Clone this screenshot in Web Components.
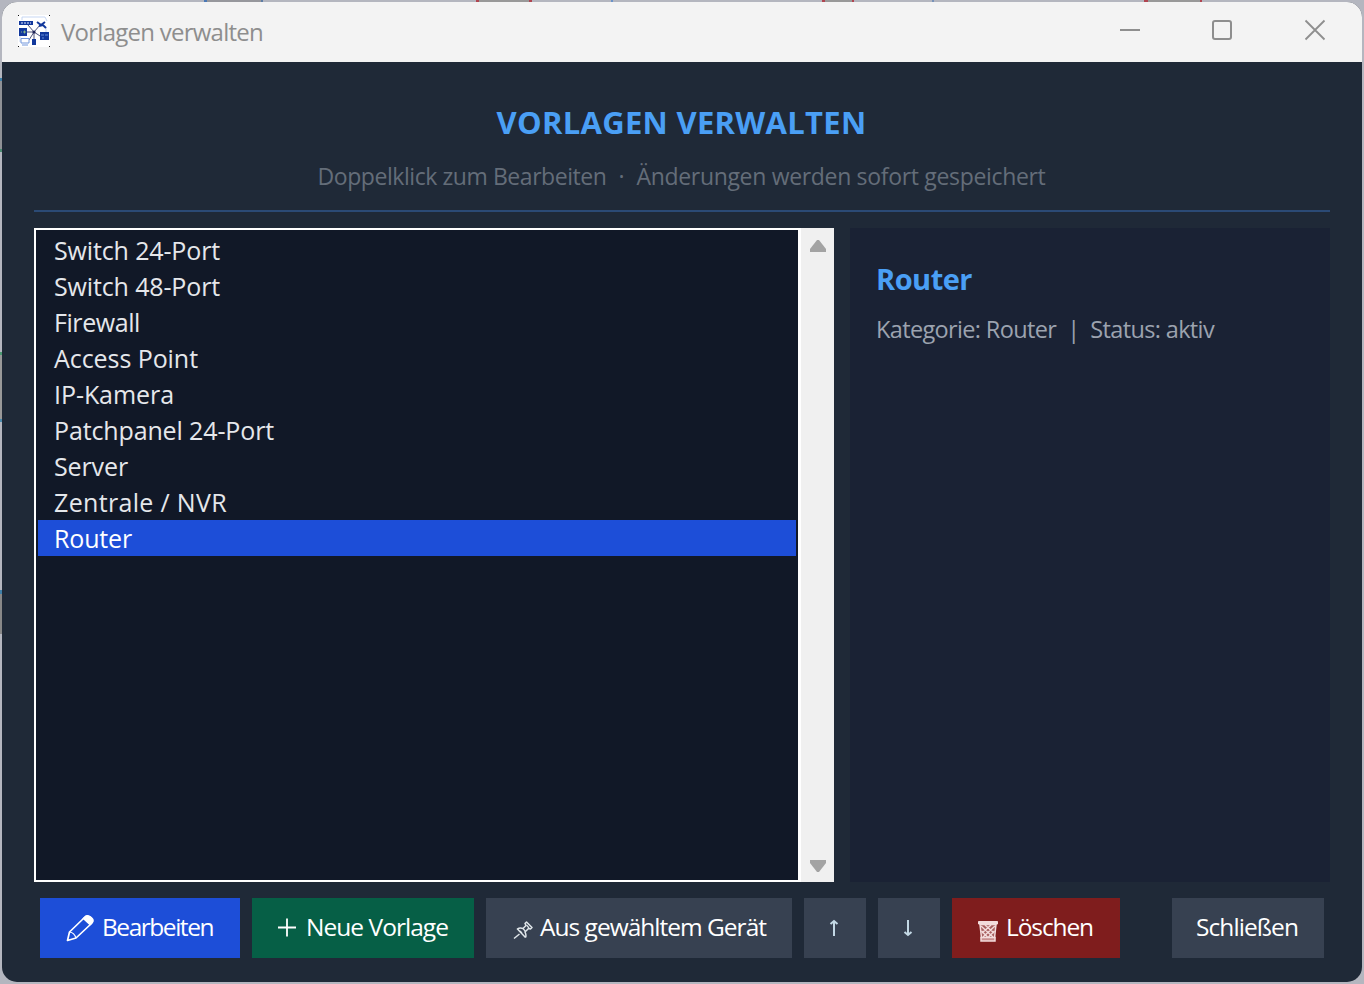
<!DOCTYPE html>
<html lang="de">
<head>
<meta charset="utf-8">
<title>Vorlagen verwalten</title>
<style>
    html, body {
        margin: 0;
        padding: 0;
        height: 100%;
        overflow: hidden;
    }
    body {
        font-family: "Open Sans", "Noto Sans", sans-serif;
    }
</style>
</head>
<body>

<app-window>
    <title-bar slot="titlebar"><fit-text width="202">Vorlagen verwalten</fit-text></title-bar>
    <page-header slot="header">
        <fit-text slot="title" width="370">VORLAGEN VERWALTEN</fit-text>
        <span slot="hint"><fit-text width="289">Doppelklick zum Bearbeiten</fit-text>&nbsp; ·&nbsp; <fit-text width="409">Änderungen werden sofort gespeichert</fit-text></span>
    </page-header>
    <template-list slot="list">
        <list-row><fit-text width="166">Switch 24-Port</fit-text></list-row>
        <list-row><fit-text width="166">Switch 48-Port</fit-text></list-row>
        <list-row><fit-text width="86">Firewall</fit-text></list-row>
        <list-row><fit-text width="144">Access Point</fit-text></list-row>
        <list-row><fit-text width="120">IP-Kamera</fit-text></list-row>
        <list-row><fit-text width="220">Patchpanel 24-Port</fit-text></list-row>
        <list-row><fit-text width="74">Server</fit-text></list-row>
        <list-row><fit-text width="173">Zentrale / NVR</fit-text></list-row>
        <list-row selected><fit-text width="78">Router</fit-text></list-row>
    </template-list>
    <detail-panel slot="detail">
        <fit-text slot="name" width="96">Router</fit-text>
        <fit-text slot="meta" width="338">Kategorie: Router&nbsp; |&nbsp; Status: aktiv</fit-text>
    </detail-panel>
    <tool-button slot="actions" style="--w:200px; --bg:#1d4ed8; --pad:26px; --gap:8px">
        <svg slot="icon" width="28" height="28" viewBox="0 0 28 28" fill="none" stroke="#fff" stroke-width="1.7" stroke-linejoin="round">
            <path d="M1.500 26.500 3.500 18 18.500 3.500C20 2 22 1.500 24 3c2.500 1.700 3.500 4 1.500 6.500L10 24Z"/>
            <path d="m17.500 4.500 2-2C22 .5 28 4.500 26.500 8L24 10.500Z" fill="#fff"/>
            <path d="M3.500 18c3.500.5 5.500 2.500 6.500 6" stroke-width="1.200"/>
        </svg>
        <fit-text width="111">Bearbeiten</fit-text>
    </tool-button>
    <tool-button slot="actions" style="--w:222px; --bg:#065f46; --pad:25px; --gap:9px">
        <svg slot="icon" width="20" height="20" viewBox="0 0 20 20" stroke="#fff" stroke-width="1.800"><path d="M1 9.500h18M10 .5v18"/></svg>
        <fit-text width="142">Neue Vorlage</fit-text>
    </tool-button>
    <tool-button slot="actions" style="--w:306px; --bg:#374151; --pad:27px; --gap:7px">
        <svg slot="icon" width="20" height="20" viewBox="0 0 20 20" fill="none" stroke="#dfe5e9" stroke-width="1.500" stroke-linejoin="round" style="margin-top:4px">
            <path d="M1 18.500 6.500 14M4 8.500 12.500 17.500M4.500 9c2-1.500 4-1 5.500-.5L13 5.500 12 3.500 13.500 2l5.500 5.500-1.500 1.500-2-.5-3.500 3.500c1 2 1.500 3.500.5 5.500"/>
            <path d="m10 8.500 2.500 3M13.500 5l2.500 3M7 11l2 2" stroke-width="1.200"/>
        </svg>
        <fit-text width="226">Aus gewähltem Gerät</fit-text>
    </tool-button>
    <tool-button slot="actions" style="--w:62px; --bg:#374151; --pad:25px; --gap:0px">
        <svg slot="icon" width="10" height="18" viewBox="0 0 10 18" fill="none" stroke="#c3d8e5" stroke-width="2"><path d="M5 17V2M1.500 5 5 2 8.500 5"/></svg>
    </tool-button>
    <tool-button slot="actions" style="--w:62px; --bg:#374151; --pad:25px; --gap:0px">
        <svg slot="icon" width="10" height="18" viewBox="0 0 10 18" fill="none" stroke="#c3d8e5" stroke-width="2"><path d="M5 1v15M1.500 13 5 16 8.500 13"/></svg>
    </tool-button>
    <tool-button slot="actions" style="--w:168px; --bg:#7f1d1d; --pad:26px; --gap:8px">
        <svg slot="icon" width="20" height="22" viewBox="0 0 20 22" fill="none" stroke="#f3dcdc" style="margin-top:5px">
            <path d="M.5 1.500h19v2.500H.5Z" fill="#f3dcdc"/>
            <path d="M2 4.500 3.500 18h13L18 4.500Z" fill="#f3dcdc" fill-opacity=".35" stroke-width="1.500"/>
            <path d="m3 6 12 11M7 5l9 8M3.500 11l6 6M17 6 5 17M13 5l-9 8M16.500 11l-6 6" stroke-width="1.500"/>
            <path d="M3 17.500h14v3.500H3Z" fill="#c98f8f" stroke-width="1.500"/>
        </svg>
        <fit-text width="87">Löschen</fit-text>
    </tool-button>
    <tool-button slot="actions" style="--w:152px; --bg:#374151; --pad:24px; --gap:0px; margin-left:auto">
        <fit-text width="102">Schließen</fit-text>
    </tool-button>
</app-window>

<script>
class AppWindow extends HTMLElement {
    constructor() {
        super();
        this.attachShadow({mode: "open"});
        this.shadowRoot.innerHTML = `
        <style>
            * { box-sizing: border-box; }
            :host {
                display: block;
                box-sizing: border-box;
                width: 1364px;
                height: 984px;
                padding: 2px;
                background:
                    linear-gradient(90deg, transparent 204px, #4a78b5 204px 207px, #96979c 207px 261px, #5e7da5 261px 263px, transparent 263px 476px, #b04550 476px 479px, #999 479px 529px, #b04550 529px 532px, transparent 532px 611px, #6b93c8 611px 613px, transparent 613px 822px, #b04550 822px 825px, #999 825px 852px, #b04550 852px 854px, transparent 854px 932px, #7792b8 932px 934px, transparent 934px 1144px, #b04550 1144px 1148px, #999 1148px 1200px, #b04550 1200px 1202px, transparent 1202px) 0 0 / 100% 2px no-repeat,
                    linear-gradient(transparent 78px, #3f7fa8 78px 81px, #8f9196 81px 149px, #4a8a72 149px 152px, transparent 152px 352px, #4a9a72 352px 355px, #999 355px 419px, #4a8aad 419px 422px, transparent 422px 590px, #3f7fa8 590px 594px, #888 594px 634px, transparent 634px) 0 0 / 2px 100% no-repeat,
                    #b4b6bf;
            }
            .frame {
                display: flex;
                flex-direction: column;
                height: 980px;
                border-radius: 15px;
                overflow: hidden;
                background: #1f2937;
            }
            .content {
                display: flex;
                flex-direction: column;
                padding: 0 32px;
            }
            .main {
                display: grid;
                grid-template-columns: 800px 480px;
                gap: 16px;
                height: 654px;
                margin-top: 16px;
            }
            .actions {
                display: flex;
                gap: 12px;
                padding: 16px 6px 0;
            }
        </style>
        <div class="frame">
            <slot name="titlebar"></slot>
            <div class="content">
                <slot name="header"></slot>
                <div class="main">
                    <slot name="list"></slot>
                    <slot name="detail"></slot>
                </div>
                <div class="actions"><slot name="actions"></slot></div>
            </div>
        </div>
        `;
    }
}

class TitleBar extends HTMLElement {
    constructor() {
        super();
        this.attachShadow({mode: "open"});
        this.shadowRoot.innerHTML = `
        <style>
            :host {
                display: flex;
                align-items: center;
                box-sizing: border-box;
                height: 60px;
                padding: 0 36px 2px 16px;
                background: #f3f3f3;
                color: #8e8e8e;
                font-size: 24px;
                line-height: 34px;
            }
            .label { margin: 2px 0 0 11px; }
            .controls {
                display: flex;
                align-items: center;
                gap: 71px;
                margin: -2px 0 0 auto;
            }
            svg { display: block; }
        </style>
        <svg width="32" height="32" viewBox="0 0 32 32">
            <path d="M0 0h32v32H0z" fill="#fff"/>
            <path d="M0 0h1v1H0zM31 0h1v1h-1zM0 31h1v1H0zM31 31h1v1h-1z" fill="#111"/>
            <path d="M4 5V2h23l2 4M2 20v7M28 12v6" fill="none" stroke="#b9cdf0" stroke-width=".8"/>
            <path d="M10 10l6 7 6-7M9 17h7l6 4M16 17l-5 8M16 17v8" fill="none" stroke="#202658" stroke-width=".8"/>
            <path d="M1 6h14v4H1z" fill="#12389c"/>
            <path d="M3 8h2M6 8h2M9 8h2M12 8h1" stroke="#dce8ff" stroke-width="1"/>
            <path d="M1 13h8v8H1z" fill="#12389c"/>
            <path d="M3 17h1M6 16h1v2H6z" stroke="#7fb08a" fill="#b8d06a"/>
            <path d="M19 7l4 3 4-3M21 11l4-1 3 3" fill="none" stroke="#12389c" stroke-width="2"/>
            <path d="M22 17h9v8h-9z" fill="#12389c"/>
            <path d="M23 20h3M27 20h3M24 23h2" stroke="#7ca3e8" stroke-width=".8"/>
            <path d="M3 23.500h8v4.500H3zM4 30h6" fill="#fff" stroke="#7397dc"/>
            <path d="M14 24h4v6h-4z" fill="#12389c"/>
            <circle cx="16" cy="17" r="1.6" fill="#202658"/>
        </svg>
        <div class="label"><slot></slot></div>
        <div class="controls">
            <svg width="20" height="22" viewBox="0 0 20 22" stroke="#8e8e8e" stroke-width="2"><path d="M0 11h20"/></svg>
            <svg width="22" height="22" viewBox="0 0 22 22" fill="none" stroke="#8e8e8e" stroke-width="2"><rect x="2" y="2" width="18" height="18" rx="2"/></svg>
            <svg width="22" height="22" viewBox="0 0 22 22" stroke="#8e8e8e" stroke-width="1.800"><path d="m1.500 1.500 19 19M20.500 1.500l-19 19"/></svg>
        </div>
        `;
    }
}

class PageHeader extends HTMLElement {
    constructor() {
        super();
        this.attachShadow({mode: "open"});
        this.shadowRoot.innerHTML = `
        <style>
            :host {
                display: flex;
                flex-direction: column;
                align-items: center;
                box-sizing: border-box;
                height: 150px;
                padding-top: 39px;
                border-bottom: 2px solid #2b4a75;
            }
            .title {
                margin-right: 1px;
                color: #4a9ff5;
                font-size: 31px;
                font-weight: 700;
                line-height: 42px;
            }
            .hint {
                margin: 17px 1px 0 0;
                color: #646d79;
                font-size: 23px;
                line-height: 32px;
            }
        </style>
        <div class="title"><slot name="title"></slot></div>
        <div class="hint"><slot name="hint"></slot></div>
        `;
    }
}

class TemplateList extends HTMLElement {
    constructor() {
        super();
        this.attachShadow({mode: "open"});
        this.shadowRoot.innerHTML = `
        <style>
            :host {
                display: grid;
                grid-template-columns: 1fr 33px;
                box-sizing: border-box;
                background: #f0f0f0;
            }
            .rows {
                padding: 2px;
                border: 2px solid #fff;
                border-right-width: 3px;
                background: #111827;
            }
            .scroll {
                display: flex;
                flex-direction: column;
                align-items: center;
                justify-content: space-between;
                padding: 12px 0 10px 1px;
            }
            svg { display: block; }
        </style>
        <div class="rows"><slot></slot></div>
        <div class="scroll">
            <svg width="16" height="12" viewBox="0 0 16 12"><path d="M7 0h2l7 9v3H0V9Z" fill="#a3a3a3"/></svg>
            <svg width="16" height="12" viewBox="0 0 16 12"><path d="M7 12h2l7-9V0H0v3Z" fill="#a3a3a3"/></svg>
        </div>
        `;
    }
}

class ListRow extends HTMLElement {
    constructor() {
        super();
        this.attachShadow({mode: "open"});
        this.shadowRoot.innerHTML = `
        <style>
            :host {
                display: block;
                height: 36px;
                padding-left: 16px;
                color: #e5e7eb;
                font-size: 25px;
                line-height: 36px;
            }
            :host([selected]) {
                background: #1d4ed8;
                color: #fff;
            }
        </style>
        <slot></slot>
        `;
    }
}

class DetailPanel extends HTMLElement {
    constructor() {
        super();
        this.attachShadow({mode: "open"});
        this.shadowRoot.innerHTML = `
        <style>
            :host {
                display: block;
                box-sizing: border-box;
                padding: 30px 26px;
                background: #1a2234;
            }
            .name {
                color: #4a9ff5;
                font-size: 29px;
                font-weight: 700;
                line-height: 42px;
            }
            .meta {
                margin-top: 12px;
                color: #9ca3af;
                font-size: 23.500px;
                line-height: 34px;
            }
        </style>
        <div class="name"><slot name="name"></slot></div>
        <div class="meta"><slot name="meta"></slot></div>
        `;
    }
}

class ToolButton extends HTMLElement {
    constructor() {
        super();
        this.attachShadow({mode: "open"});
        this.shadowRoot.innerHTML = `
        <style>
            :host {
                display: flex;
                align-items: center;
                gap: var(--gap);
                box-sizing: border-box;
                flex: none;
                width: var(--w);
                height: 60px;
                padding-left: var(--pad);
                background: var(--bg);
                color: #fff;
                font-size: 24.500px;
                line-height: 34px;
            }
            .text { margin-top: -2px; }
            ::slotted(svg) { display: block; flex: none; }
        </style>
        <slot name="icon"></slot>
        <div class="text"><slot></slot></div>
        `;
    }
}

// spreads its text over the given width with letter-spacing
class FitText extends HTMLElement {
    constructor() {
        super();
        this.attachShadow({mode: "open"});
        this.shadowRoot.innerHTML = `
        <style>
            :host {
                display: inline-block;
                white-space: nowrap;
                vertical-align: top;
            }
        </style>
        <slot></slot>
        `;
    }
    connectedCallback() {
        const natural = this.getBoundingClientRect().width;
        const target = Number(this.getAttribute("width"));
        this.style.letterSpacing = (target - natural) / this.textContent.length + "px";
    }
}

customElements.define("app-window", AppWindow);
customElements.define("title-bar", TitleBar);
customElements.define("page-header", PageHeader);
customElements.define("template-list", TemplateList);
customElements.define("list-row", ListRow);
customElements.define("detail-panel", DetailPanel);
customElements.define("tool-button", ToolButton);
customElements.define("fit-text", FitText);
</script>
</body>
</html>
